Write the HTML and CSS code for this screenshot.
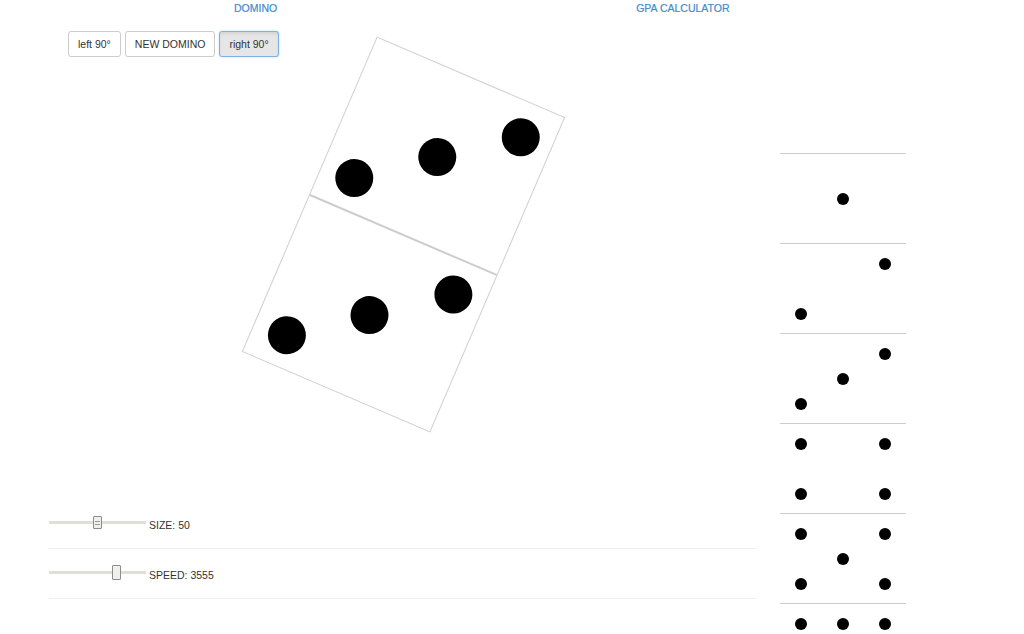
FILE: index.html
```html
<!DOCTYPE html>
<html lang="en">
<head>
<meta charset="utf-8">
<title>Domino</title>
<link rel="stylesheet" href="styles.css">
</head>
<body>
<nav class="topnav">
  <a class="navlink" href="#">DOMINO</a>
  <a class="navlink" href="#">GPA CALCULATOR</a>
</nav>
<main class="main">
  <section class="left">
    <div class="btnrow">
      <button class="btn">left 90°</button>
      <button class="btn">NEW DOMINO</button>
      <button class="btn active">right 90°</button>
    </div>
    <div class="canvas">
      <div class="domino">
        <div class="half">
          <span class="pip r1 c3"></span>
          <span class="pip r2 c2"></span>
          <span class="pip r3 c1"></span>
        </div>
        <div class="divider"></div>
        <div class="half">
          <span class="pip r1 c3"></span>
          <span class="pip r2 c2"></span>
          <span class="pip r3 c1"></span>
        </div>
      </div>
    </div>
    <div class="ctrlrow">
      <input class="range grip" type="range" min="0" max="100" value="50">
      <span class="label">SIZE: 50</span>
    </div>
    <div class="ctrlrow">
      <input class="range" type="range" min="0" max="5000" value="3555">
      <span class="label">SPEED: 3555</span>
    </div>
  </section>
  <aside class="faces">
    <div class="face blank"></div>
    <div class="face">
      <span class="dot r2 c2"></span>
    </div>
    <div class="face">
      <span class="dot r1 c3"></span>
      <span class="dot r3 c1"></span>
    </div>
    <div class="face">
      <span class="dot r1 c3"></span>
      <span class="dot r2 c2"></span>
      <span class="dot r3 c1"></span>
    </div>
    <div class="face">
      <span class="dot r1 c1"></span>
      <span class="dot r1 c3"></span>
      <span class="dot r3 c1"></span>
      <span class="dot r3 c3"></span>
    </div>
    <div class="face">
      <span class="dot r1 c1"></span>
      <span class="dot r1 c3"></span>
      <span class="dot r2 c2"></span>
      <span class="dot r3 c1"></span>
      <span class="dot r3 c3"></span>
    </div>
    <div class="face">
      <span class="dot r1 c1"></span>
      <span class="dot r1 c2"></span>
      <span class="dot r1 c3"></span>
      <span class="dot r3 c1"></span>
      <span class="dot r3 c2"></span>
      <span class="dot r3 c3"></span>
    </div>
  </aside>
</main>
</body>
</html>
```
FILE: styles.css
```css
html, body {
  margin: 0;
  padding: 0;
  background: #fff;
  overflow: hidden;
}
body {
  font-family: "Liberation Sans", Arial, sans-serif;
  color: #333;
  font-size: 10.5px;
}
.topnav {
  display: flex;
  height: 16px;
  line-height: 16px;
  padding-left: 234px;
  gap: 359px;
}
.navlink {
  color: #428bca;
  text-decoration: none;
  font-size: 10.5px;
  -webkit-text-stroke: 0.2px #428bca;
}
.main {
  display: flex;
  align-items: flex-start;
}
.left {
  width: 708px;
  margin-left: 49px;
}
.btnrow {
  display: flex;
  gap: 4px;
  margin-top: 15px;
  padding-left: 19px;
}
.btn {
  height: 26px;
  padding: 0 9px;
  font-family: "Liberation Sans", Arial, sans-serif;
  font-size: 10.5px;
  color: #333;
  background: #fff;
  border: 1px solid #ccc;
  border-radius: 3px;
}
.btn.active {
  background: #e6e6e6;
  border-color: #7fb0e6;
  box-shadow: inset 0 2px 3px rgba(0,0,0,0.08), 0 0 2px rgba(102,175,233,0.5);
}
.canvas {
  height: 436px;
  margin-top: 6px;
}
.domino {
  width: 205px;
  height: 343px;
  box-sizing: border-box;
  margin-left: 252px;
  border: 1px solid #cfcfcf;
  background: #fff;
  display: flex;
  flex-direction: column;
  transform: rotate(23.2deg);
}
.half {
  flex: 1;
  display: grid;
  grid-template-columns: repeat(3, 68.5px);
  grid-template-rows: repeat(3, 51.5px);
  justify-content: center;
  align-content: center;
  justify-items: center;
  align-items: center;
  padding-top: 3px;
  padding-left: 1px;
}
.divider {
  height: 2px;
  background: #cdcdcd;
}
.pip {
  width: 38px;
  height: 38px;
  border-radius: 50%;
  background: #000;
}
.r1 { grid-row: 1; }
.r2 { grid-row: 2; }
.r3 { grid-row: 3; }
.c1 { grid-column: 1; }
.c2 { grid-column: 2; }
.c3 { grid-column: 3; }
.ctrlrow {
  display: flex;
  align-items: center;
  height: 50px;
  box-sizing: border-box;
  border-bottom: 1px solid #eee;
  padding-bottom: 2px;
}
.ctrlrow:first-of-type {
  height: 49px;
}
.label {
  margin-left: 3px;
  margin-top: 4px;
  font-size: 10.5px;
  color: #333;
}
.range {
  -webkit-appearance: none;
  appearance: none;
  width: 97px;
  height: 16px;
  margin: 0;
  padding: 0;
  background: transparent;
}
.range::-webkit-slider-runnable-track {
  height: 3px;
  background: #e1ded8;
  border: none;
}
.range::-webkit-slider-thumb {
  -webkit-appearance: none;
  width: 9px;
  height: 15px;
  margin-top: -6px;
  background: #f1efec;
  border: 1px solid #8c8c8c;
  border-radius: 1px;
  box-sizing: border-box;
}
.range.grip::-webkit-slider-thumb {
  margin-top: -5px;
  height: 13px;
  background: linear-gradient(to bottom, transparent 4px, #9a9a9a 4px, #9a9a9a 5px, transparent 5px, transparent 7px, #9a9a9a 7px, #9a9a9a 8px, transparent 8px), #f1efec;
  background-size: 5px 100%;
  background-position: center;
  background-repeat: no-repeat;
}
.faces {
  width: 126px;
  margin-left: 23px;
  margin-top: 47px;
}
.face {
  height: 90px;
  box-sizing: border-box;
  border-top: 1px solid #cccccc;
  padding-top: 7px;
  display: grid;
  grid-template-columns: repeat(3, 42px);
  grid-template-rows: repeat(3, 25px);
  justify-items: center;
  align-items: center;
}
.face.blank {
  border-top: none;
}
.dot {
  width: 12px;
  height: 12px;
  border-radius: 50%;
  background: #000;
}
```
